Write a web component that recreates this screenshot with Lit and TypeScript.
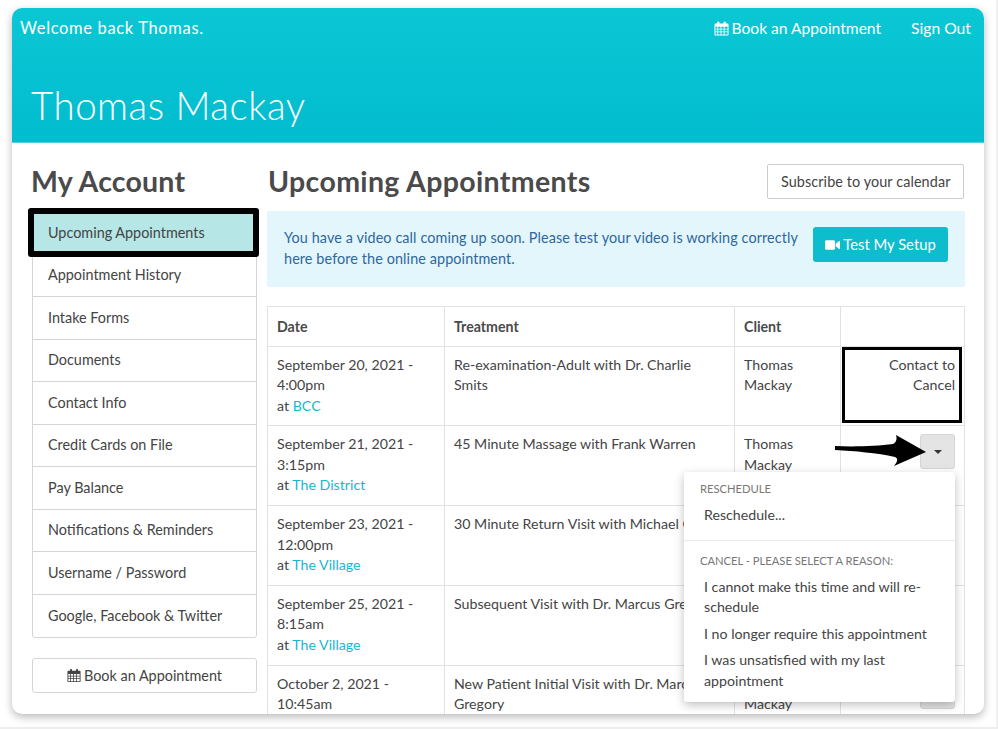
import { LitElement, html, css, svg } from "lit";
import { customElement } from "lit/decorators.js";

const calendar = (cls: string) => html`<svg class=${cls} viewBox="0 0 16 16" aria-hidden="true">
  <path fill="currentColor" fill-rule="evenodd" d="M1.5 2.6H3.4V1.6a1.1 1.1 0 0 1 1.1-1.1h.2a1.1 1.1 0 0 1 1.1 1.1V2.6h4.4V1.6A1.1 1.1 0 0 1 11.3.5h.2a1.1 1.1 0 0 1 1.1 1.1V2.6h1.9c.6 0 1 .4 1 1V14.5c0 .6-.4 1-1 1H1.5c-.6 0-1-.4-1-1V3.6c0-.6.4-1 1-1ZM1.5 6.2V8.2H3.6V6.2ZM4.5 6.2V8.2H7V6.2ZM7.9 6.2V8.2H10.4V6.2ZM11.3 6.2V8.2H14.500V6.2ZM1.5 9.1V11.2H3.6V9.1ZM4.5 9.1V11.2H7V9.1ZM7.9 9.1V11.2H10.4V9.1ZM11.3 9.1V11.2H14.500V9.1ZM1.5 12.1V14.5H3.6V12.1ZM4.5 12.1V14.5H7V12.1ZM7.9 12.1V14.5H10.4V12.1ZM11.3 12.1V14.5H14.500V12.1Z"/>
</svg>`;

const video = html`<svg class="vid" viewBox="0 0 16 12" aria-hidden="true">
  <path fill="currentColor" d="M1.6 1h7.6c.9 0 1.6.7 1.6 1.6v6.8c0 .9-.7 1.6-1.6 1.6H1.6C.7 11 0 10.300 0 9.400V2.600C0 1.700.7 1 1.600 1ZM11.500 4.700 15 1.800c.4-.3 1-.1 1 .5v7.400c0 .6-.6.800-1 .5l-3.500-2.900Z"/>
</svg>`;

const NAV = [
  "Upcoming Appointments",
  "Appointment History",
  "Intake Forms",
  "Documents",
  "Contact Info",
  "Credit Cards on File",
  "Pay Balance",
  "Notifications & Reminders",
  "Username / Password",
  "Google, Facebook & Twitter",
];

const ROWS = [
  { date: "September 20, 2021 -", time: "4:00pm", loc: "BCC", treat: "Re-examination-Adult with Dr. Charlie Smits", kind: "contact" },
  { date: "September 21, 2021 -", time: "3:15pm", loc: "The District", treat: "45 Minute Massage with Frank Warren", kind: "open" },
  { date: "September 23, 2021 -", time: "12:00pm", loc: "The Village", treat: "30 Minute Return Visit with Michael Curtis", kind: "btn" },
  { date: "September 25, 2021 -", time: "8:15am", loc: "The Village", treat: "Subsequent Visit with Dr. Marcus Gregory", kind: "btn" },
  { date: "October 2, 2021 -", time: "10:45am", loc: "The Village", treat: "New Patient Initial Visit with Dr. Marcus Gregory", kind: "btn" },
];

@customElement("app-root")
export class AppRoot extends LitElement {
  static styles = css`
    :host {
      display: block;
      width: 998px;
      height: 729px;
      overflow: hidden;
      background: #fff;
      font-family: "Lato", "Liberation Sans", sans-serif;
      font-size: 14.4px;
      color: #444;
      box-sizing: border-box;
    }
    * { box-sizing: border-box; }
    .page {
      height: 729px;
      padding: 8px 12px 13px 12px;
      border-right: 2px solid #f1f1f1;
      border-bottom: 2px solid #eee;
    }
    .card {
      height: 706px;
      border-radius: 10px;
      overflow: hidden;
      background: #fff;
      box-shadow: 0 3px 9px rgba(0, 0, 0, 0.28);
      display: flex;
      flex-direction: column;
    }
    .hero {
      height: 135px;
      flex: none;
      background: linear-gradient(180deg, #0bc7d4 0%, #02bccf 100%);
      border-bottom: 1px solid #4fd3e2;
      color: #fff;
      padding: 9px 13px 0 8px;
    }
    .topbar {
      display: flex;
      align-items: center;
      font-size: 16.5px;
      line-height: 21px;
    }
    .welcome { flex: 1; letter-spacing: 0.65px; }
    .toplink { display: flex; align-items: center; gap: 3px; font-size: 15.6px; margin-left: 30px; padding-top: 1px; }
    .signout { font-size: 15.7px; }
    .cal-top { width: 15px; height: 15px; }
    .cal-btn { width: 14px; height: 15px; }
    .name {
      margin: 43px 0 0 11px;
      font-size: 38.5px;
      line-height: 46px;
      font-weight: 300;
      letter-spacing: 0.5px;
    }
    .body {
      flex: 1;
      min-height: 0;
      display: flex;
      gap: 10px;
      padding: 20px 19px 0 20px;
    }
    .side { width: 225px; flex: none; }
    h2 {
      margin: 0;
      font-size: 28.5px;
      line-height: 37px;
      font-weight: 700;
      color: #4a4a4a;
      letter-spacing: 0.35px;
    }
    .side h2 { letter-spacing: 0.2px; margin-left: -1px; }
    .nav {
      margin-top: 11px;
      border: 1px solid #d5d5d5;
      border-radius: 3px;
    }
    .nav-item {
      height: 42.5px;
      display: flex;
      align-items: center;
      padding: 0 0 1px 15px;
      border-bottom: 1px solid #d5d5d5;
    }
    .nav-item:last-child { border-bottom: 0; }
    .nav-item.active {
      position: relative;
      background: #b6e6e6;
    }
    .nav-item.active::after {
      content: "";
      position: absolute;
      left: -5px;
      right: -3px;
      top: -4px;
      bottom: -3px;
      border: 6px solid #000;
      border-radius: 3px;
    }
    .book {
      margin-top: 20px;
      height: 35px;
      padding-bottom: 1px;
      display: flex;
      align-items: center;
      justify-content: center;
      gap: 3px;
      border: 1px solid #d5d5d5;
      border-radius: 3px;
    }
    .main { flex: 1; min-width: 0; }
    .title-row {
      display: flex;
      justify-content: space-between;
      align-items: flex-start;
    }
    .title-row h2 { margin-left: 1px; }
    .subscribe {
      height: 35px;
      padding: 0 12.500px 1px;
      display: flex;
      align-items: center;
      letter-spacing: 0.1px;
      border: 1px solid #ccc;
      border-radius: 2px;
      margin-top: 1px;
      margin-right: 1px;
    }
    .alert {
      margin-top: 11px;
      height: 76px;
      background: #e3f6fc;
      border-radius: 2px;
      color: #2f679c;
      display: flex;
      align-items: center;
      justify-content: space-between;
      padding: 0 17px 3px 17px;
      line-height: 21px;
      letter-spacing: 0.1px;
    }
    .alert p { margin: 0; width: 525px; }
    .test {
      flex: none;
      height: 35px;
      width: 135px;
      background: #0dbccd;
      color: #fff;
      border-radius: 3px;
      display: flex;
      align-items: center;
      justify-content: center;
      gap: 3px;
      font-size: 14.8px;
      letter-spacing: 0;
      margin-bottom: 6px;
    }
    .vid { width: 15px; height: 12px; }
    table {
      margin-top: 19px;
      width: 697px;
      table-layout: fixed;
      border-collapse: collapse;
      font-size: 14.2px;
      line-height: 20.500px;
    }
    th, td {
      border: 1px solid #e2e2e2;
      padding: 8px 9px 9.250px;
      vertical-align: top;
      text-align: left;
      font-weight: 400;
    }
    th { height: 39px; font-weight: 700; color: #4a4a4a; padding: 10px 9px 8px; }
    a { color: #1ab5d4; text-decoration: none; }
    td.act { position: relative; text-align: right; }
    .mark {
      position: absolute;
      left: 1px;
      right: 2px;
      top: 0;
      height: 76px;
      border: 3px solid #000;
    }
    .caret-btn {
      display: flex;
      align-items: center;
      justify-content: center;
      width: 35px;
      height: 35px;
      margin-left: auto;
      border: 1px solid #d6d6d6;
      border-radius: 3px;
      background: #e4e4e4;
    }
    .caret-btn i {
      width: 0;
      height: 0;
      border-left: 4px solid transparent;
      border-right: 4px solid transparent;
      border-top: 4px solid #333;
    }
    .arrow {
      position: absolute;
      left: -6px;
      top: 9px;
      width: 93px;
      height: 32px;
    }
    .menu {
      position: absolute;
      right: 9px;
      top: 46px;
      width: 271px;
      height: 230px;
      background: #fff;
      border-radius: 3px;
      box-shadow: 0 3px 10px rgba(0, 0, 0, 0.25);
      text-align: left;
      z-index: 2;
      padding-top: 7px;
    }
    .menu h6 {
      margin: 0 0 3px;
      padding: 0 16px;
      font-size: 11.2px;
      font-weight: 400;
      line-height: 20px;
      color: #777;
      text-transform: uppercase;
    }
    .menu-item { padding: 3px 20px; line-height: 20.500px; }
    .menu hr { border: 0; border-top: 1px solid #e8e8e8; margin: 11px 0 10px; }
  `;

  render() {
    return html`<div class="page"><div class="card">
      <header class="hero">
        <div class="topbar">
          <span class="welcome">Welcome back Thomas.</span>
          <span class="toplink">${calendar("cal-top")}Book an Appointment</span>
          <span class="toplink signout">Sign Out</span>
        </div>
        <h1 class="name">Thomas Mackay</h1>
      </header>
      <div class="body">
        <aside class="side">
          <h2>My Account</h2>
          <nav class="nav">
            ${NAV.map((n, i) => html`<div class="nav-item ${i === 0 ? "active" : ""}">${n}</div>`)}
          </nav>
          <div class="book">${calendar("cal-btn")}Book an Appointment</div>
        </aside>
        <main class="main">
          <div class="title-row">
            <h2>Upcoming Appointments</h2>
            <div class="subscribe">Subscribe to your calendar</div>
          </div>
          <div class="alert">
            <p>You have a video call coming up soon. Please test your video is working correctly here before the online appointment.</p>
            <div class="test">${video}Test My Setup</div>
          </div>
          <table>
            <colgroup><col style="width:177px" /><col style="width:290px" /><col style="width:106px" /><col style="width:124px" /></colgroup>
            <thead><tr><th>Date</th><th>Treatment</th><th>Client</th><th></th></tr></thead>
            <tbody>
              ${ROWS.map((r) => html`<tr>
                <td>${r.date}<br />${r.time}<br />at <a>${r.loc}</a></td>
                <td>${r.treat}</td>
                <td>Thomas Mackay</td>
                <td class="act">${this.action(r.kind)}</td>
              </tr>`)}
            </tbody>
          </table>
        </main>
      </div>
    </div></div>`;
  }

  action(kind: string) {
    if (kind === "contact") return html`Contact to Cancel<div class="mark"></div>`;
    const btn = html`<span class="caret-btn"><i></i></span>`;
    if (kind === "btn") return btn;
    return html`${btn}
      <svg class="arrow" viewBox="0 0 93 32">${svg`<path fill="#000" d="M0 11 C20 12 42 11 58 9 C62 7 62 3 61 0 L91 17 L59 31 C62 27 64 24 60 22 C42 18 20 16 0 15Z"/>`}</svg>
      <div class="menu">
        <h6>Reschedule</h6>
        <div class="menu-item">Reschedule...</div>
        <hr />
        <h6>Cancel - Please select a reason:</h6>
        <div class="menu-item">I cannot make this time and will re-schedule</div>
        <div class="menu-item">I no longer require this appointment</div>
        <div class="menu-item">I was unsatisfied with my last appointment</div>
      </div>`;
  }
}
